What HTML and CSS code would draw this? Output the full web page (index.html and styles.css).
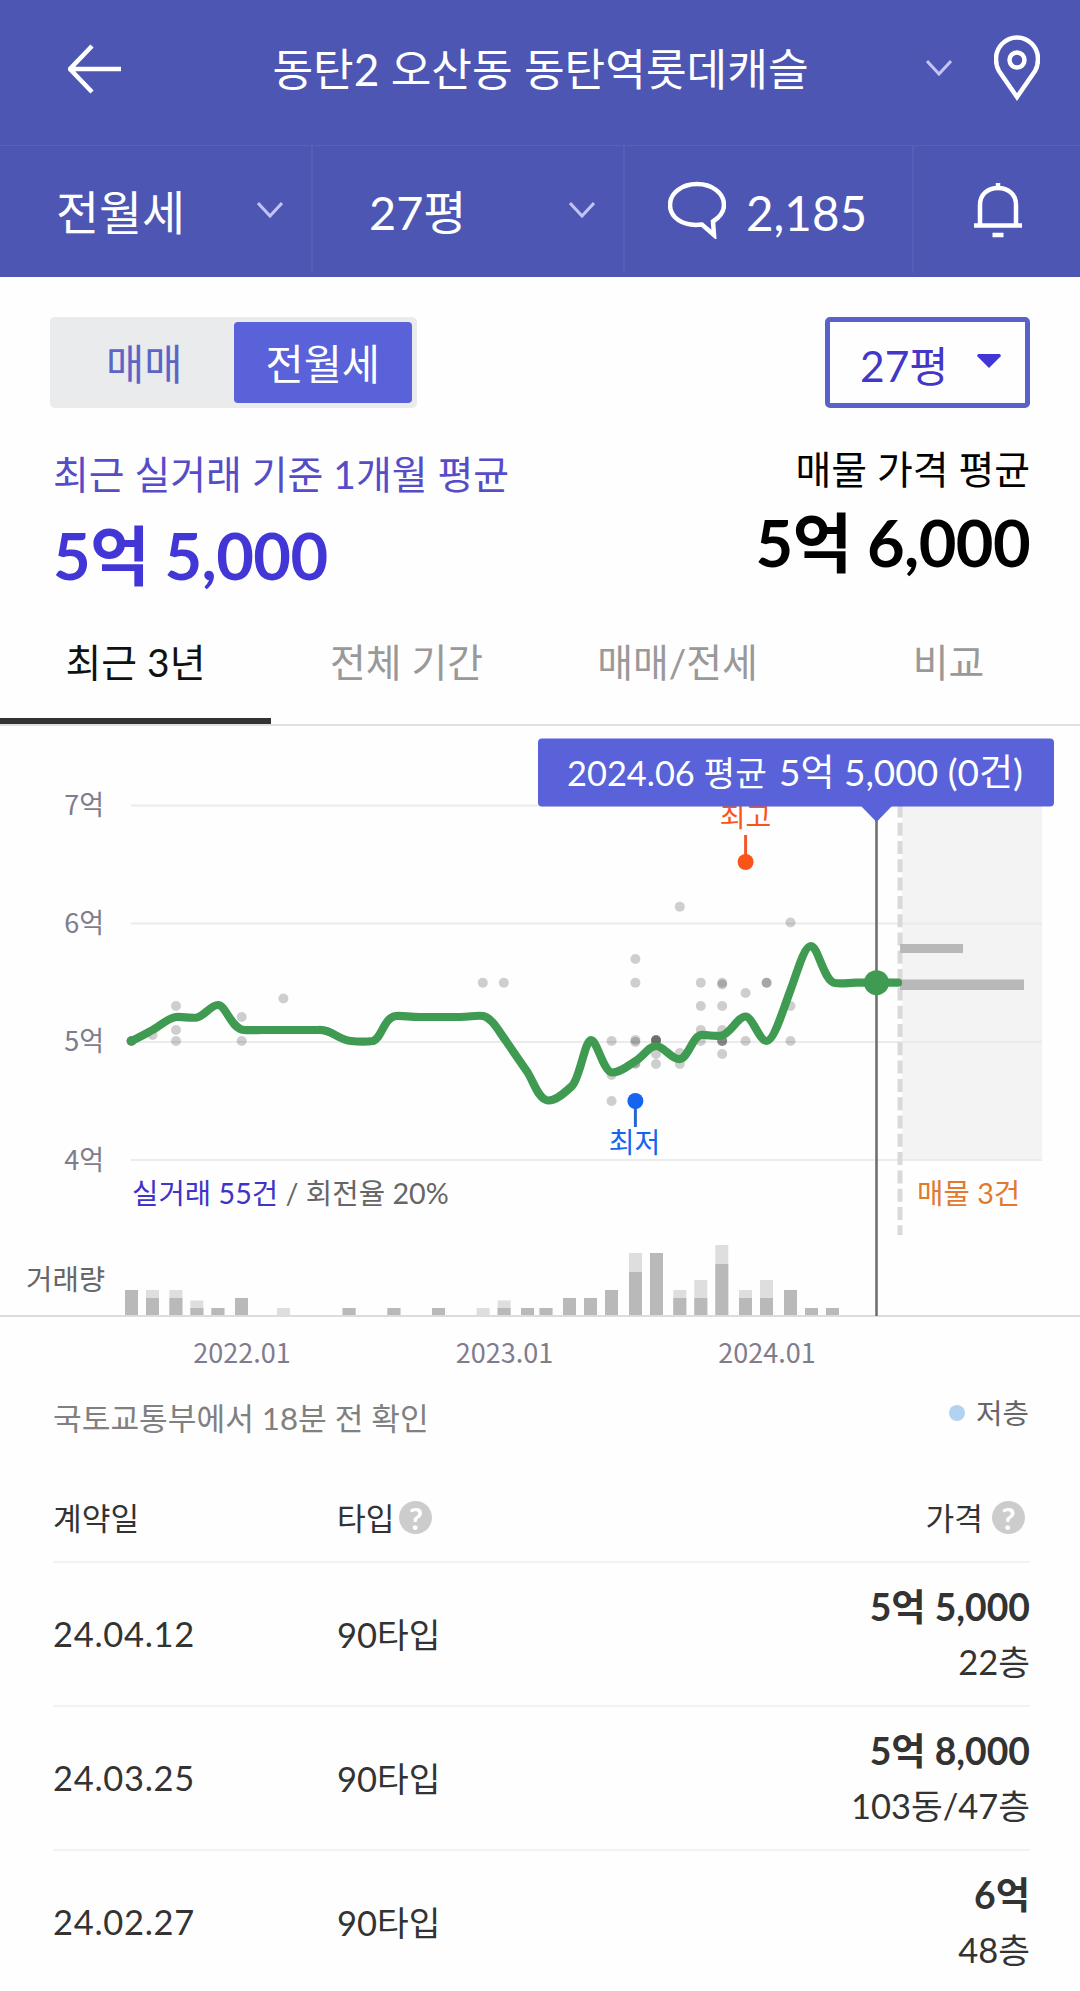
FILE: index.html
```html
<!DOCTYPE html>
<html lang="ko">
<head>
    <meta charset="UTF-8">
    <meta name="viewport" content="width=device-width, initial-scale=1.0">
    <title>동탄역롯데캐슬 실거래가</title>
    <link rel="stylesheet" href="styles.css">
</head>
<body>
    <header class="header">
        <div class="title-bar">
            <div class="title-left">
                <svg width="54" height="50" viewBox="0 0 54 50" class="icon"><path d="M24 2 L2 25 L24 48 M2 25 H53" stroke-width="4.500"/></svg>
            </div>
            <h1>동탄2 오산동 동탄역롯데캐슬</h1>
            <div class="title-right">
                <svg width="26" height="16" viewBox="0 0 26 16" class="icon chevron"><path d="M1 1 L13 14 L25 1"/></svg>
                <svg width="46" height="66" viewBox="0 0 46 66" class="icon"><path d="M23 62 L5 36 C2 31 2 28 2 24 A21 21.5 0 0 1 44 24 C44 28 44 31 41 36 Z" stroke-width="4.500"/><circle cx="23" cy="25" r="7.500" stroke-width="4.500"/></svg>
            </div>
        </div>
        <nav class="filter-bar">
            <div class="filter">
                <span>전월세</span>
                <svg width="26" height="16" viewBox="0 0 26 16" class="icon chevron"><path d="M1 1 L13 14 L25 1"/></svg>
            </div>
            <div class="filter">
                <span>27평</span>
                <svg width="26" height="16" viewBox="0 0 26 16" class="icon chevron"><path d="M1 1 L13 14 L25 1"/></svg>
            </div>
            <div class="filter talk">
                <svg width="58" height="58" viewBox="0 0 58 58" class="icon"><path d="M46 54 L34 43.500 C14 46 2 36 2 24 C2 12 14 3 29 3 C44 3 56 12 56 24 C56 31 52 36 45 40.500 L46 54 Z" stroke-width="4.500"/></svg>
                <span>2,185</span>
            </div>
            <div class="filter alarm">
                <svg width="48" height="56" viewBox="0 0 48 56" class="icon"><path d="M24 1 V6 M6 43 V23 C6 12 14 6 24 6 C34 6 42 12 42 23 V43 M0 43.500 H48 M18.500 53 H29.500" stroke-width="4.500"/></svg>
            </div>
        </nav>
    </header>

    <section class="controls">
        <div class="toggle">
            <button type="button">매매</button>
            <button type="button" class="on">전월세</button>
        </div>
        <button type="button" class="size-select">
            <span>27평</span>
            <svg width="24" height="14" viewBox="0 0 24 14"><path d="M1 0 H23 L24 2 L12 14 L0 2 Z" fill="#4237d6"/></svg>
        </button>
    </section>

    <section class="summary">
        <div class="recent">
            <p>최근 실거래 기준 1개월 평균</p>
            <strong>5억 5,000</strong>
        </div>
        <div class="asking">
            <p>매물 가격 평균</p>
            <strong>5억 6,000</strong>
        </div>
    </section>

    <nav class="tabs">
        <a class="active">최근 3년</a>
        <a>전체 기간</a>
        <a>매매/전세</a>
        <a>비교</a>
    </nav>

    <svg class="chart" width="1080" height="650" viewBox="0 726 1080 650">
        <!-- listings area -->
        <rect x="902" y="806" width="140" height="355" fill="#f3f3f3"/>
        <g class="grid">
            <path d="M131 805.500 H1042 M131 923.500 H1042 M131 1042 H1042 M131 1160 H1042"/>
        </g>
        <g class="axis" text-anchor="end">
            <text x="104" y="815">7억</text>
            <text x="104" y="933">6억</text>
            <text x="104" y="1051">5억</text>
            <text x="104" y="1170">4억</text>
        </g>
        <path d="M900 804 V1235" stroke="#d9d9d9" stroke-width="5" stroke-dasharray="13 5.300" stroke-dashoffset="-0.400"/>
        <rect x="900" y="944" width="63" height="9" fill="#b8b8b8"/>
        <rect x="900" y="979.500" width="124" height="10.500" fill="#b8b8b8"/>

        <!-- single deals -->
        <g id="dots" class="dots"></g>

        <path class="line" d="M131 1041 C138 1038 145 1034 152.500 1030 C160 1026 168 1018 176 1017 C183 1016.500 190 1018.500 197 1017.500 C204 1016 211 1005 218 1005 C226 1005 231 1029 244 1030 C250 1030.500 256 1030 263 1030 L318 1030 C332 1029 338 1040 351 1041 C360 1042 366 1042 373 1041 C382 1038 384 1017 396 1016 C402 1015.500 410 1017 420 1017 L460 1017 C470 1017 476 1015 483 1016 C492 1018 498 1030 506 1041 L528 1073 C534 1083 539 1100 548 1100.500 C557 1101 566 1091 572 1086 C580 1078 585 1040 591 1040 C597 1040 603 1071 612 1072.500 C619 1073 628 1066 635.500 1061 C643 1057 649 1046 656 1046 C664 1046 672 1060 680 1059 C688 1058 693 1036 701 1035 C708 1034.500 715 1037 722 1035.500 C730 1034 738 1016.500 745.600 1016.500 C752 1016.500 760 1041.500 766.600 1041 C774 1041 783 1010 790.500 990 C797 973 804 946 811 946 C818 946 824 982 835 983 C842 984 849 982.700 856 982.700 L898 982.700"/>

        <g class="high">
            <text x="745.600" y="827" text-anchor="middle">최고</text>
            <path d="M745.600 835 V862"/>
            <circle cx="745.600" cy="862" r="8"/>
        </g>
        <g class="low">
            <text x="634.500" y="1153" text-anchor="middle">최저</text>
            <path d="M635.400 1101 V1127"/>
            <circle cx="635.400" cy="1101" r="8"/>
        </g>

        <g class="note">
            <text x="132" y="1204"><tspan fill="#4033c8">실거래 55건</tspan> / 회전율 20%</text>
            <text x="917" y="1204" fill="#e07a2f">매물 3건</text>
            <text x="26" y="1290">거래량</text>
        </g>

        <!-- monthly volume -->
        <g id="volume"></g>
        <rect x="0" y="1315" width="1080" height="2" fill="#dcdcdc"/>
        <g class="axis" text-anchor="middle">
            <text x="242" y="1363">2022.01</text>
            <text x="504.500" y="1363">2023.01</text>
            <text x="767" y="1363">2024.01</text>
        </g>

        <!-- selected month -->
        <path d="M876.500 815 V1316" stroke="#707070" stroke-width="2.600"/>
        <circle cx="876.500" cy="982.700" r="12.500" fill="#3f9a52"/>
        <g class="tooltip">
            <rect x="538" y="738.500" width="516" height="68" rx="4"/>
            <path d="M861 806 H892 L876.500 822 Z"/>
            <text x="567" y="785.500"><tspan class="small">2024.06 평균</tspan></text>
            <text x="779" y="785.500">5억 5,000 (0건)</text>
        </g>
    </svg>

    <div class="status">
        <p>국토교통부에서 18분 전 확인</p>
        <span class="legend"><i></i>저층</span>
    </div>

    <table class="deals">
        <thead>
            <tr>
                <th class="date">계약일</th>
                <th class="type">타입<i class="help">?</i></th>
                <th class="price">가격<i class="help">?</i></th>
            </tr>
        </thead>
        <tbody>
            <tr>
                <td class="day">24.04.12</td>
                <td>90타입</td>
                <td class="price"><b>5억 5,000</b><span>22층</span></td>
            </tr>
            <tr>
                <td class="day">24.03.25</td>
                <td>90타입</td>
                <td class="price"><b>5억 8,000</b><span>103동/47층</span></td>
            </tr>
            <tr>
                <td class="day">24.02.27</td>
                <td>90타입</td>
                <td class="price"><b>6억</b><span>48층</span></td>
            </tr>
        </tbody>
    </table>
    <script src="chart.js"></script>
</body>
</html>
```

FILE: chart.js
```js
const NS = 'http://www.w3.org/2000/svg';

function add(parent, tag, attrs) {
    const el = document.createElementNS(NS, tag);
    for (const key in attrs) el.setAttribute(key, attrs[key]);
    parent.appendChild(el);
}

// [x, y, y, ...] one row per month, repeated y values overlap
const deals = [
    [131.5, 1041, 1041, 1041],
    [152.5, 1035],
    [176, 1006, 1030, 1041],
    [241.7, 1017, 1041],
    [283.4, 998.5],
    [482.8, 982.7],
    [503.8, 982.7],
    [611.6, 1041, 1075, 1101],
    [635.4, 959, 982.7, 1040, 1042, 1063, 1064],
    [656, 1040, 1040, 1040, 1041, 1054, 1064],
    [679.8, 906.7, 1053, 1064],
    [700.8, 982.7, 1006, 1030, 1041],
    [722.2, 982.7, 984.5, 1006, 1030, 1041, 1041, 1041, 1054],
    [745.6, 993, 1041],
    [766.6, 982.7, 982.7],
    [790.5, 922.5, 1006, 1041]
];
const dots = document.getElementById('dots');
deals.forEach(([x, ...ys]) => {
    ys.forEach(y => add(dots, 'circle', { cx: x, cy: y, r: 5 }));
});

// [x, dark height, full height]
const volume = [
    [125, 26, 26], [146, 18, 26], [169.4, 18, 26], [190.4, 8, 15.5], [211.4, 8, 8],
    [235, 18, 18], [277, 0, 8], [342.6, 8, 8], [387.4, 8, 8], [432, 8, 8],
    [476.6, 0, 8], [497.6, 8, 15.5], [521, 8, 8], [539.5, 8, 8], [563, 18, 18],
    [584, 18, 18], [605, 26, 26], [629, 44, 63], [650, 63, 63], [673.3, 18, 26],
    [694.3, 18, 36], [715.3, 52, 71], [739, 18, 26], [760, 18, 36], [784, 26, 26],
    [805, 8, 8], [826, 8, 8]
];
const bars = document.getElementById('volume');
volume.forEach(([x, dark, full]) => {
    add(bars, 'rect', { x: x, y: 1316 - full, width: 13, height: full, fill: '#dedede' });
    add(bars, 'rect', { x: x, y: 1316 - dark, width: 13, height: dark, fill: '#b9b9b9' });
});
```

FILE: styles.css
```css
* {
    box-sizing: border-box;
}
body {
    margin: 0;
    width: 1080px;
    height: 1991px;
    overflow: hidden;
    background: #fefefe;
    font-family: Lato, "Noto Sans CJK KR", sans-serif;
    color: #333;
}
p, h1 {
    margin: 0;
    font-weight: 400;
}
button {
    border: 0;
    padding: 0;
    background: none;
    font-family: inherit;
}
.icon {
    display: block;
    fill: none;
    stroke: #fff;
}
.chevron {
    stroke: #c3c4f5;
    stroke-width: 3;
}

/* Header */
.header {
    height: 277px;
    background: #4d56b2;
    color: #fff;
}
.title-bar {
    display: grid;
    grid-template-columns: 153px 1fr 153px;
    align-items: center;
    height: 146px;
    padding-bottom: 9px;
    border-bottom: 1px solid #5860b9;
}
.title-left {
    padding-left: 68px;
}
.title-bar h1 {
    padding-left: 1px;
    font-size: 44.200px;
    line-height: 137px;
    text-align: center;
    white-space: nowrap;
}
.title-right {
    display: flex;
    align-items: center;
    justify-content: space-between;
    padding: 0 40px 2px 0;
    margin-left: -1px;
}
.filter-bar {
    display: grid;
    grid-template-columns: 313px 312px 289px 166px;
    height: 131px;
}
.filter {
    display: flex;
    align-items: center;
    justify-content: space-between;
    padding: 0 28px 0 56px;
    margin-bottom: 4px;
    border-right: 2px solid #565eb8;
    font-size: 46.800px;
    line-height: 133px;
}
.filter span {
    height: 127px;
}
.filter.talk {
    justify-content: flex-start;
    gap: 20px;
    padding: 0 0 0 43px;
    font-size: 47.500px;
}
.filter.alarm {
    justify-content: flex-start;
    padding-left: 60px;
    border-right: 0;
}

/* Trade type and size */
.controls {
    display: flex;
    justify-content: space-between;
    padding: 40px 50px 0;
}
.toggle {
    display: flex;
    width: 367px;
    height: 91px;
    padding: 5px;
    border-radius: 5px;
    background: #e9ebec;
}
.toggle button {
    flex: 1;
    padding: 0 0 1px;
    border-radius: 4px;
    font-size: 41.500px;
    color: #5c64c6;
}
.toggle .on {
    background: #5962d8;
    color: #fff;
}
.size-select {
    display: flex;
    align-items: center;
    gap: 29px;
    width: 205px;
    height: 91px;
    padding: 2px 0 0 30px;
    border: 5px solid #5962c8;
    border-radius: 5px;
    font-size: 42.500px;
    color: #4237c8;
}
.size-select svg {
    margin-bottom: 5px;
}

/* Average prices */
.summary {
    display: flex;
    justify-content: space-between;
    height: 185px;
    padding: 36px 50px 0 53px;
}
.summary p {
    font-size: 38.900px;
    line-height: 51px;
}
.summary strong {
    display: block;
    font-size: 65px;
    line-height: 82px;
    letter-spacing: -0.600px;
}
.recent {
    padding-top: 5px;
}
.recent p {
    color: #564cc8;
}
.recent strong {
    margin-top: 14px;
    color: #4237d6;
}
.asking {
    color: #000;
    text-align: right;
}
.asking strong {
    margin-top: 6px;
}

/* Tabs */
.tabs {
    display: flex;
    height: 133px;
    padding-top: 20px;
    border-bottom: 2px solid #e0e0e0;
}
.tabs a {
    flex: 0 0 271px;
    border-bottom: 6px solid transparent;
    font-size: 38.900px;
    line-height: 99px;
    text-align: center;
    color: #999;
}
.tabs .active {
    border-color: #333;
    color: #111;
}

/* Price chart */
.chart {
    display: block;
}
.grid path {
    stroke: #ebebeb;
    stroke-width: 2;
}
.axis {
    font-family: "Noto Sans CJK KR", sans-serif;
    font-size: 27px;
    fill: #7f7c8c;
}
.dots circle {
    fill: #000;
    fill-opacity: 0.19;
}
.line {
    fill: none;
    stroke: #3f9a52;
    stroke-width: 8.2;
    stroke-linecap: round;
}
.high, .low {
    font-size: 28px;
    stroke-width: 3;
}
.high {
    fill: #fa5519;
}
.low {
    fill: #1565f0;
}
.high path {
    stroke: #f05a28;
}
.low path {
    stroke: #2a66d0;
}
.note {
    font-size: 28.700px;
    fill: #666;
}
.tooltip {
    font-size: 37px;
    fill: #5962d8;
}
.tooltip text {
    fill: #fff;
}
.tooltip .small {
    font-size: 34.400px;
}

/* Status line */
.status {
    display: flex;
    justify-content: space-between;
    height: 64px;
    padding: 14px 51px 0 53px;
    line-height: 46px;
}
.status p {
    padding-top: 5px;
    font-size: 31.200px;
    color: #808080;
}
.legend {
    display: flex;
    align-items: center;
    gap: 11px;
    height: 46px;
    font-size: 28.800px;
    color: #666;
}
.legend i {
    width: 16px;
    height: 16px;
    border-radius: 50%;
    background: #b3d1f2;
}

/* Deals */
.deals {
    width: 977px;
    margin-left: 53px;
    border-collapse: collapse;
    table-layout: fixed;
}
.deals th, .deals td {
    padding: 0;
    border-bottom: 2px solid #f3f3f3;
    text-align: left;
}
.deals th {
    height: 122px;
    padding-top: 35px;
    font-size: 31.200px;
    font-weight: 400;
    line-height: 85px;
}
.deals .date {
    width: 284px;
}
.deals .type {
    width: 300px;
}
.help {
    display: inline-block;
    width: 33px;
    height: 33px;
    margin-left: 5px;
    border-radius: 50%;
    background: #ccc;
    font-size: 31px;
    font-style: normal;
    font-weight: 700;
    line-height: 34px;
    text-align: center;
    color: #fff;
}
.price .help {
    margin: 0 5px 0 9px;
}
.deals td {
    height: 144px;
    padding-bottom: 2px;
    font-size: 34.500px;
}
.deals .day {
    letter-spacing: 0.700px;
}
.deals .price {
    padding-bottom: 0;
    text-align: right;
}
.deals td b, .deals td span {
    display: block;
}
.deals td b {
    font-size: 37.300px;
    line-height: 55px;
}
.deals td span {
    line-height: 55px;
}
```
